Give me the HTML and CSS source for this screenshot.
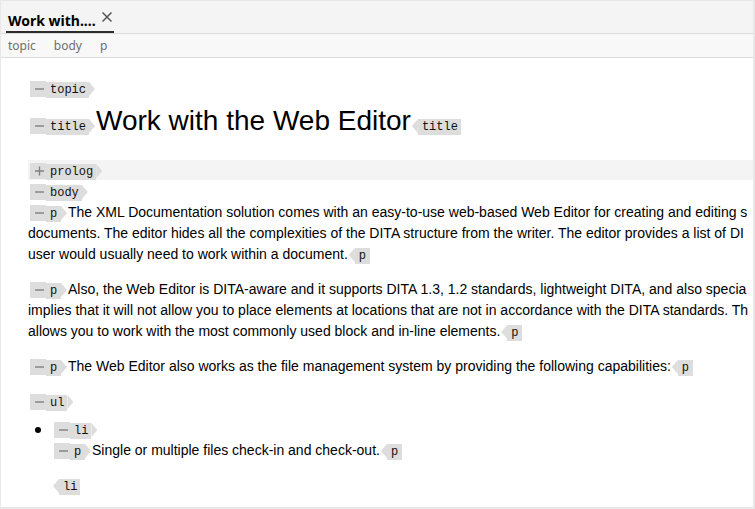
FILE: index.html
```
<!DOCTYPE html>
<html lang="en">
<head>
<meta charset="utf-8">
<title>Web Editor</title>
<link rel="stylesheet" href="styles.css">
</head>
<body>
<svg class="defs" aria-hidden="true">
  <symbol id="minus" viewBox="0 0 16 16"><path d="M5 8h9" stroke="#808080" stroke-width="1.4"/></symbol>
  <symbol id="plus" viewBox="0 0 16 16"><path d="M5 8h9M9.500 3.500v9" stroke="#808080" stroke-width="1.4"/></symbol>
</svg>
<div class="frame">
  <header class="tabs">
    <div class="tab">
      <span class="tab-name">Work with....</span>
      <button class="close" type="button" aria-label="Close tab"><svg viewBox="0 0 10 10"><path d="M.5.5l9 9M9.500.5l-9 9"/></svg></button>
    </div>
  </header>
  <nav class="crumbs" aria-label="Element path">
    <a href="#">topic</a><a href="#">body</a><a href="#">p</a>
  </nav>
  <main class="editor">
    <div class="row first"><span class="tag open"><svg><use href="#minus"/></svg><code>topic</code></span></div>
    <h1><span class="tag open"><svg><use href="#minus"/></svg><code>title</code></span>Work with the Web Editor<span class="tag end"><code>title</code></span></h1>
    <div class="row prolog"><span class="tag open"><svg><use href="#plus"/></svg><code>prolog</code></span></div>
    <div class="row"><span class="tag open"><svg><use href="#minus"/></svg><code>body</code></span></div>
    <p><span class="tag open"><svg><use href="#minus"/></svg><code>p</code></span>The XML Documentation solution comes with an easy-to-use web-based Web Editor for creating and editing s<br>documents. The editor hides all the complexities of the DITA structure from the writer. The editor provides a list of DI<br>user would usually need to work within a document.<span class="tag end"><code>p</code></span></p>
    <p><span class="tag open"><svg><use href="#minus"/></svg><code>p</code></span>Also, the Web Editor is DITA-aware and it supports DITA 1.3, 1.2 standards, lightweight DITA, and also specia<br>implies that it will not allow you to place elements at locations that are not in accordance with the DITA standards. Th<br>allows you to work with the most commonly used block and in-line elements.<span class="tag end"><code>p</code></span></p>
    <p><span class="tag open"><svg><use href="#minus"/></svg><code>p</code></span>The Web Editor also works as the file management system by providing the following capabilities:<span class="tag end"><code>p</code></span></p>
    <div class="row"><span class="tag open"><svg><use href="#minus"/></svg><code>ul</code></span></div>
    <ul>
      <li>
        <div class="row"><span class="tag open"><svg><use href="#minus"/></svg><code>li</code></span></div>
        <p><span class="tag open"><svg><use href="#minus"/></svg><code>p</code></span>Single or multiple files check-in and check-out.<span class="tag end"><code>p</code></span></p>
        <div class="row"><span class="tag end"><code>li</code></span></div>
      </li>
    </ul>
  </main>
</div>
</body>
</html>
```
FILE: styles.css
```
* { box-sizing: border-box; }

body {
  margin: 0;
  background: #fff;
  color: #000;
  font: 14px/21px "Liberation Sans", Arial, sans-serif;
}

.defs { display: none; }

.frame {
  display: flex;
  flex-direction: column;
  min-height: 100vh;
  border: solid #e8e8e8;
  border-width: 1px 2px 2px 1px;
  overflow: hidden;
}

.tabs {
  display: flex;
  padding: 0 5px;
  background: #f4f4f4;
  border-bottom: 1px solid #dcdcdc;
}

.tab {
  display: flex;
  gap: 6px;
  height: 32px;
  padding: 8px 2px 0;
  border-bottom: 2px solid #2c2c2c;
  font: 700 14px/24px "Noto Sans", sans-serif;
}

.close {
  width: 10px;
  height: 10px;
  margin-top: 3px;
  padding: 0;
  border: 0;
  background: none;
}

.close svg {
  display: block;
  width: 10px;
  height: 10px;
  stroke: #555;
  stroke-width: 1.5;
}

.crumbs {
  display: flex;
  gap: 18px;
  padding: 1px 7px 0;
  background: #f8f8f8;
  border-bottom: 1px solid #dcdcdc;
  font: 12px/22px "Noto Sans", sans-serif;
}

.crumbs a {
  color: #6e6e6e;
  text-decoration: none;
}

.editor {
  flex: 1;
  padding: 20px 0 0 27px;
  white-space: nowrap;
}

h1 {
  margin: 0 0 17px;
  font-size: 28px;
  font-weight: 400;
  line-height: 44px;
}

p { margin: 0 0 14px; }

.prolog {
  background: #f4f4f4;
  line-height: 20px;
  margin-bottom: 1px;
}

ul {
  margin: 7px 0 0;
  padding-left: 24px;
  list-style: none;
}

li { position: relative; }

li::before {
  content: "";
  position: absolute;
  top: 8px;
  left: -17px;
  width: 6px;
  height: 6px;
  border-radius: 50%;
  background: #000;
}

.tag {
  display: inline-flex;
  align-items: flex-start;
  margin: 0 1px 0 2px;
  color: #111;
  line-height: 16px;
}

.tag.end { margin-left: 1px; }

.tag svg {
  width: 16px;
  height: 16px;
  background: #ddd;
}

.tag code {
  align-self: baseline;
  min-width: 15px;
  margin-top: 1px;
  padding: 0 3px 0 4px;
  background: #ddd;
  font: 12px/16px "Liberation Mono", "Courier New", monospace;
}

.tag::before,
.tag::after {
  width: 6px;
  height: 14px;
  margin-top: 1px;
  background: #ddd;
}

.open::after {
  content: "";
  clip-path: polygon(0 0, 100% 50%, 0 100%);
}

.end::before {
  content: "";
  clip-path: polygon(100% 0, 0 50%, 100% 100%);
}
```
